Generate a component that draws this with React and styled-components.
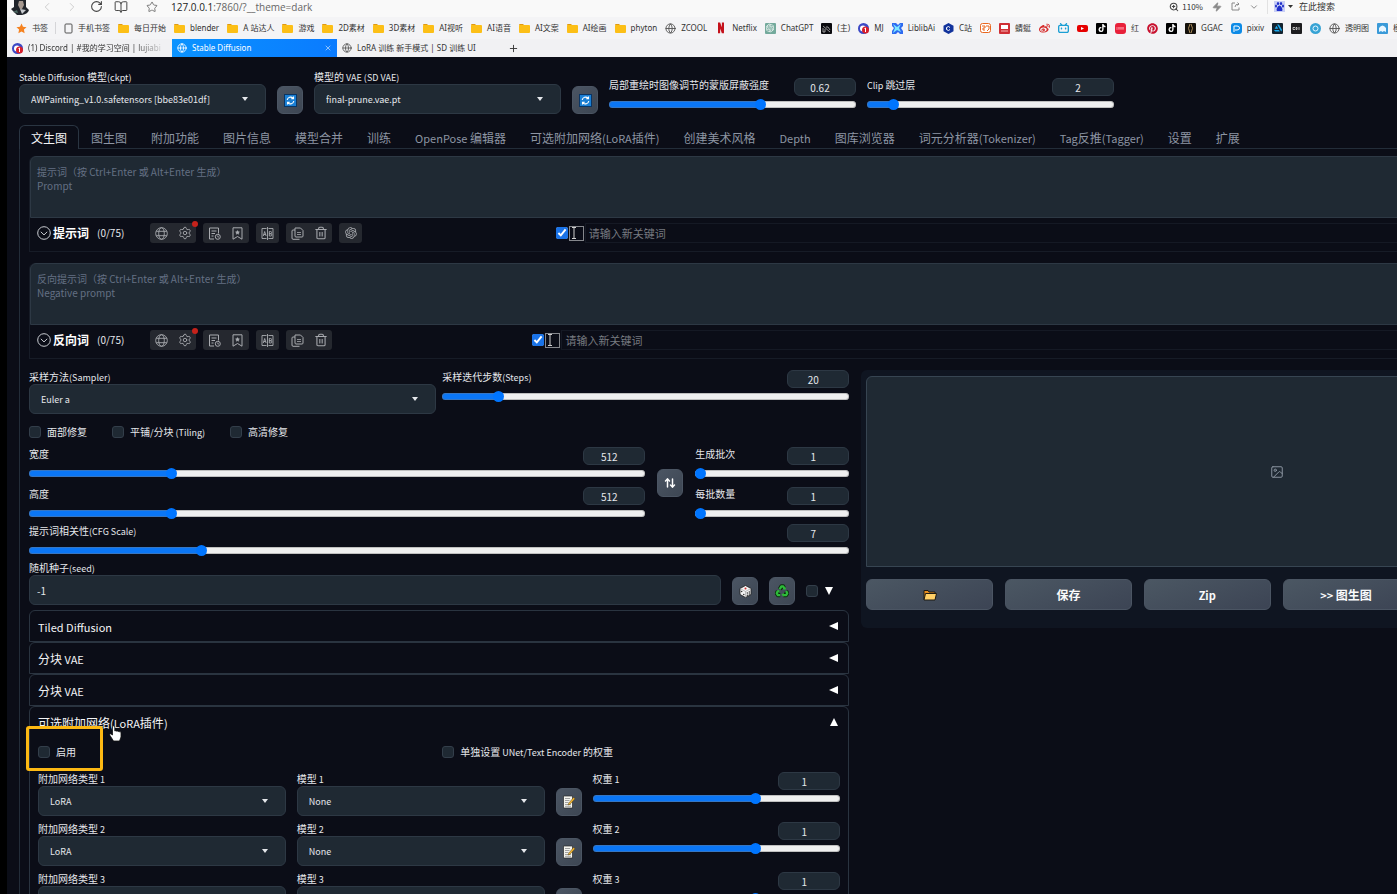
import { useState } from "react"
import styled, { createGlobalStyle, css } from "styled-components"
import { ChevronDown, ChevronLeft, ChevronRight, Globe, Plus, RotateCw, Star, X, ZoomIn, BookOpen, Zap, Image as ImageIcon, ArrowUpDown, Settings, Trash2 } from "lucide-react"
import { FaBilibili, FaPinterest, FaTiktok, FaWeibo, FaArtstation } from "react-icons/fa6"
import { RiOpenaiFill, RiNetflixFill } from "react-icons/ri"

const GlobalStyle = createGlobalStyle`
    *, *::before, *::after { box-sizing: border-box; }
    body {
        margin: 0;
        background: #000;
        font-family: "Noto Sans CJK SC", "Noto Sans", sans-serif;
        overflow: hidden;
    }
    button, input, select, textarea {
        font-family: inherit;
        margin: 0;
    }
    button { cursor: pointer; }
    svg { display: block; flex: none; }
`

/* ---------- data ---------- */

const bookmarks = [
    { icon: "star", text: "书签", divider: true },
    { icon: "phone", text: "手机书签" },
    { icon: "folder", text: "每日开始" },
    { icon: "folder", text: "blender" },
    { icon: "folder", text: "A 站达人" },
    { icon: "folder", text: "游戏" },
    { icon: "folder", text: "2D素材" },
    { icon: "folder", text: "3D素材" },
    { icon: "folder", text: "AI视听" },
    { icon: "folder", text: "AI语音" },
    { icon: "folder", text: "AI文案" },
    { icon: "folder", text: "AI绘画" },
    { icon: "folder", text: "phyton" },
    { icon: "globe", text: "ZCOOL" },
    { icon: "netflix", text: "Netflix" },
    { icon: "chatgpt", text: "ChatGPT" },
    { icon: "peak", text: "(主)" },
    { icon: "discord", text: "MJ" },
    { icon: "liblib", text: "LiblibAi" },
    { icon: "hex", text: "C站" },
    { icon: "orange" },
    { icon: "redbox", text: "蜻蜓" },
    { icon: "weibo" },
    { icon: "bili" },
    { icon: "youtube" },
    { icon: "tiktok" },
    { icon: "xhs", text: "红" },
    { icon: "pinterest" },
    { icon: "tiktok" },
    { icon: "ggac", text: "GGAC" },
    { icon: "pixiv", text: "pixiv" },
    { icon: "artstation" },
    { icon: "cgi" },
    { icon: "ring" },
    { icon: "globe", text: "透明图" },
    { icon: "ghost", text: "模" },
]

const navTabs = [
    "文生图", "图生图", "附加功能", "图片信息", "模型合并", "训练", "OpenPose 编辑器",
    "可选附加网络(LoRA插件)", "创建美术风格", "Depth", "图库浏览器", "词元分析器(Tokenizer)",
    "Tag反推(Tagger)", "设置", "扩展",
]

const foldedPanels = ["Tiled Diffusion", "分块 VAE", "分块 VAE"]

/* ---------- icons ---------- */

function BookmarkIcon({ name }) {
    switch (name) {
        case "star":
            return <svg width="11" height="11" viewBox="0 0 24 24"><path fill="#f58220" d="M12 1l3.3 7.2 7.7.9-5.700 5.300 1.500 7.800L12 18.300 5.200 22.200l1.500-7.800L1 9.100l7.700-.9z" /></svg>
        case "phone":
            return <svg width="9" height="11" viewBox="0 0 9 11"><rect x="1" y="1" width="7" height="9" rx="1" fill="none" stroke="#555" /></svg>
        case "folder":
            return (
                <svg width="11" height="11" viewBox="0 0 11 11">
                    <path fill="#e09a12" d="M0 2q0-1 1-1h3l1.500 1.500H0z" />
                    <rect y="2" width="11" height="8" rx="1" fill="#fcbf17" />
                </svg>
            )
        case "globe":
            return <Globe size={11} color="#555" strokeWidth={2} />
        case "netflix":
            return <RiNetflixFill size={12} color="#c4111b" />
        case "chatgpt":
            return <Chip $bg="#74aa9c"><RiOpenaiFill size={10} color="#fff" /></Chip>
        case "peak":
            return <Chip $bg="#0b0b0f"><svg width="11" height="11" viewBox="0 0 11 11"><path d="M2 3l7 6M2 5v4h2V6M5 4h2l2 3" stroke="#bbb" fill="none" strokeWidth=".8" /></svg></Chip>
        case "discord":
            return (
                <svg width="11" height="11" viewBox="0 0 22 22">
                    <circle cx="11" cy="11" r="11" fill="#3c49c5" />
                    <circle cx="10" cy="11" r="6" fill="#fff" />
                    <circle cx="15" cy="14" r="7" fill="#d71f2b" />
                    <path d="M13 11l2-1v8" stroke="#fff" strokeWidth="2" fill="none" />
                </svg>
            )
        case "liblib":
            return (
                <svg width="11" height="11" viewBox="0 0 11 11">
                    <path d="M0 0h4l2 2 2-2h3v3L9 5l2 3v3H8L6 9l-2 2H0V8l2-3-2-2z" fill="#2f6bf0" />
                    <path d="M1 1l4 3 4-3-2 4 2 4-4-2-4 3 2-5z" fill="#7ee8ff" />
                </svg>
            )
        case "hex":
            return <svg width="11" height="11" viewBox="0 0 22 22"><path d="M11 0l10 5.500v11L11 22 1 16.500v-11z" fill="#12339c" /><path d="M14 9l-3-2-4 2v4l4 2 3-2" fill="none" stroke="#fff" strokeWidth="2" /></svg>
        case "orange":
            return <svg width="11" height="11" viewBox="0 0 11 11"><rect x=".5" y=".5" width="10" height="9" rx="2" fill="#fff" stroke="#e9671f" /><path d="M2 3h3v2H3v2h2M6 3h3v3L7 8" stroke="#e9671f" fill="none" /></svg>
        case "redbox":
            return <Chip $bg="#cf2f35"><svg width="11" height="11" viewBox="0 0 11 11"><rect x="2" y="2" width="7" height="4" fill="#fff" /><path d="M2 8h7" stroke="#f5b5b5" /></svg></Chip>
        case "weibo":
            return <FaWeibo size={11} color="#d52b2b" />
        case "bili":
            return <FaBilibili size={11} color="#1c9fd4" />
        case "youtube":
            return <svg width="11" height="11" viewBox="0 0 11 11"><rect y="2" width="11" height="7" rx="2" fill="#e60000" /><path d="M4 4l3 1.500L4 7z" fill="#fff" /></svg>
        case "tiktok":
            return <Chip $bg="#000"><FaTiktok size={8} color="#fff" /></Chip>
        case "xhs":
            return <Chip $bg="#e8203a" $round><svg width="11" height="11" viewBox="0 0 11 11"><path d="M2 4v3M4 4v3M6 4v3M8 4v3M3 5h6" stroke="#ff9aa8" strokeWidth=".8" /></svg></Chip>
        case "pinterest":
            return <FaPinterest size={11} color="#c8102e" />
        case "ggac":
            return <Chip $bg="#15110c"><svg width="11" height="11" viewBox="0 0 11 11"><path d="M5 1Q2 5 5 10M6 1q3 4 0 9" stroke="#a88a5a" fill="none" /></svg></Chip>
        case "pixiv":
            return <Chip $bg="#0e8be6" $round><svg width="11" height="11" viewBox="0 0 11 11"><path d="M3 9V3h3q2.500 0 2.500 2T6 7H4" stroke="#fff" fill="none" /></svg></Chip>
        case "artstation":
            return <Chip $bg="#13232f"><FaArtstation size={8} color="#19a9ef" /></Chip>
        case "cgi":
            return <Chip $bg="#1d1d1f"><svg width="11" height="11" viewBox="0 0 11 11"><path d="M2 4.500h2M2 4.500v2h2M5 4.500v2h1v-2zM8 4v3" stroke="#ddd" fill="none" strokeWidth=".8" /></svg></Chip>
        case "ring":
            return <svg width="11" height="11" viewBox="0 0 11 11"><circle cx="5.500" cy="5.500" r="5.500" fill="#37a3d4" /><circle cx="5.500" cy="5.500" r="2.500" fill="none" stroke="#e5f6ff" /></svg>
        default:
            return <Chip $bg="#3a9ad8"><svg width="11" height="11" viewBox="0 0 11 11"><path d="M2 9V5q3.500-5 7 0v4L7 8 5.500 9 4 8z" fill="#e8f6ff" /></svg></Chip>
    }
}

const RefreshEmoji = () => (
    <svg width="13" height="13" viewBox="0 0 13 13">
        <rect width="13" height="13" fill="#0a3564" />
        <rect x="1" y="1" width="11" height="11" fill="#1a7fd4" />
        <path d="M3.200 6A3.400 3.400 0 0 1 9 4.200M9.800 7A3.400 3.400 0 0 1 4 8.800M9.500 2.500v2.300H7.200M3.500 10.500V8.200h2.300" fill="none" stroke="#fff" strokeWidth="1.100" />
    </svg>
)

const DiceEmoji = () => (
    <svg width="13" height="13" viewBox="0 0 13 13">
        <path d="M6.500.5l5.500 3v6l-5.500 3-5.500-3v-6z" fill="#f4f4f4" stroke="#1c1c1c" strokeWidth=".8" />
        <path d="M1 3.500l5.500 3 5.500-3M6.500 6.500v6" stroke="#999" fill="none" strokeWidth=".6" />
        <circle cx="6.500" cy="3.500" r="1" fill="#c33" />
        <g fill="#222"><circle cx="2.700" cy="6.500" r=".7" /><circle cx="4.800" cy="9.500" r=".7" /><circle cx="8.300" cy="8" r=".7" /><circle cx="10.300" cy="7" r=".7" /><circle cx="8.300" cy="10.300" r=".7" /><circle cx="10.300" cy="9" r=".7" /></g>
    </svg>
)

const RecycleEmoji = () => (
    <svg width="14" height="14" viewBox="0 0 24 24" fill="none" strokeLinejoin="round">
        <g stroke="#0a2a0c" strokeWidth="7"><path d="M8 9l3-5h3l2 4M19 12l2 4-2 3h-5M9 19H5l-2-3 2-4" /></g>
        <g stroke="#2dbb3a" strokeWidth="4"><path d="M8 9l3-5h3l2 4M19 12l2 4-2 3h-5M9 19H5l-2-3 2-4" /></g>
        <path d="M13 9l5 1 1-5zM15 15v7l-4-3.500zM2 12l5-2 1 5z" fill="#2dbb3a" />
    </svg>
)

const NoteEmoji = () => (
    <svg width="14" height="14" viewBox="0 0 14 14">
        <path d="M1.500 1h9v12h-9z" fill="#f3f3ee" stroke="#2a2a2a" strokeWidth=".7" />
        <path d="M3 3.500h5M3 5.500h4.500M3 7.500h3.500M3 9.500h6M3 11.300h6" stroke="#8d8d8d" strokeWidth=".8" />
        <path d="M6.500 8.500l5-6 1.500 1.200-5 5.500-2 .8z" fill="#f2b632" stroke="#5b4310" strokeWidth=".5" />
    </svg>
)

const FolderEmoji = () => (
    <svg width="14" height="12" viewBox="0 0 14 12">
        <path d="M1 10.500V1.500h4l1 1.500h6v2" fill="#e88d1c" stroke="#1d1a12" strokeWidth="1" />
        <path d="M1 11l1.500-6.500h11L12 11z" fill="#ffd066" stroke="#1d1a12" strokeWidth="1" />
    </svg>
)

const CircleDown = () => (
    <svg width="14" height="14" viewBox="0 0 14 14" fill="none" stroke="#c9ccd1">
        <circle cx="7" cy="7" r="6.300" />
        <path d="M3.800 5.800L7 8.900l3.200-3.100" />
    </svg>
)

const GridGlobe = () => (
    <svg width="13" height="13" viewBox="0 0 13 13" fill="none" stroke="currentColor" strokeWidth=".9">
        <circle cx="6.500" cy="6.500" r="5.800" />
        <ellipse cx="6.500" cy="6.500" rx="2.800" ry="5.800" />
        <path d="M1.200 4.300h10.600M1.200 8.700h10.600" />
    </svg>
)

const HistoryIcon = () => (
    <svg width="13" height="13" viewBox="0 0 13 13" fill="none" stroke="currentColor">
        <path d="M6 12H1.500V1h9v5.500M3.500 4h5M3.500 6.500h3.500M3.500 9h2" />
        <circle cx="9.800" cy="9.800" r="2.500" />
        <path d="M9.800 8.500v1.500h1.200" strokeWidth=".8" />
    </svg>
)

const BookmarkStar = () => (
    <svg width="13" height="13" viewBox="0 0 13 13" fill="none" stroke="currentColor">
        <path d="M2 .8h9v11.400L6.500 9.500 2 12.200z" />
        <path d="M6.500 3.200l.8 1.300 1.400.3-1 1.100.2 1.500-1.400-.6-1.400.6.2-1.500-1-1.100 1.400-.3z" fill="currentColor" strokeWidth=".2" />
    </svg>
)

const TranslateIcon = () => (
    <svg width="13" height="13" viewBox="0 0 13 13" fill="none" stroke="currentColor" strokeWidth=".9">
        <path d="M5.500 1.500H1v10h4.500M7.500 1.500H12v10H7.500M6.500 0v13" />
        <path d="M2.300 9L3.700 4.500 5.100 9M2.700 7.500h2M8.300 4.500V9h1.500q1 0 1-1.200T9.800 6.700H8.300h1.300q1 0 1-1.100t-1-1.100z" />
    </svg>
)

const CopyIcon = () => (
    <svg width="13" height="13" viewBox="0 0 13 13" fill="none" stroke="currentColor">
        <path d="M4 1h5.500L12 3.500V9q0 1-1 1H5Q4 10 4 9zM4 3H2Q1 3 1 4v7q0 1.300 1 1.300h6.500" />
        <path d="M6 5.500h4M6 7.500h4" strokeWidth=".8" />
    </svg>
)

const IBeam = () => (
    <svg width="6" height="12" viewBox="0 0 6 12"><path d="M1 .5h4M1 11.500h4M3 .5v11" stroke="#d0d0d0" /></svg>
)

const HandCursor = () => (
    <svg width="13" height="17" viewBox="0 0 13 17">
        <path d="M3.500 1.500q1.500-1.500 2.300.3V6q1.200-.8 2 .2 1.300-.6 2 .5 1.700-.4 2.200 1V12l-1.500 4H4.500L1 10.500q-.8-1.500.6-1.800L3.500 10z" fill="#fff" stroke="#111" strokeWidth=".8" />
    </svg>
)

const Avatar = () => (
    <svg width="18" height="16" viewBox="0 0 18 16">
        <path d="M3 0h12v8l3 3q-1 4-7 5H6L0 10l3-2z" fill="#20242a" />
        <path d="M8 2h4l1 4-2 4H9L7 6z" fill="#a5988f" />
        <path d="M9 10l6 1-4 4z" fill="#c9ccd0" />
        <path d="M2 13l4-2 1 3z" fill="#4d6a63" />
    </svg>
)

const BaiduPaw = () => (
    <svg width="11" height="11" viewBox="0 0 22 22">
        <rect width="22" height="22" fill="#c9cff5" />
        <g fill="#2130c9"><ellipse cx="8" cy="5" rx="2.300" ry="3" /><ellipse cx="14" cy="5" rx="2.300" ry="3" /><ellipse cx="4" cy="10" rx="2" ry="3" /><ellipse cx="18" cy="10" rx="2" ry="3" /><path d="M11 9q3 0 5 5t0 6H6q-2-1 0-6t5-5z" /></g>
    </svg>
)

/* ---------- pieces ---------- */

// latin letters of the CJK font look big beside the hanzi, so they get one size less
function Mixed({ text, size }) {
    return (
        <span>
            {text.split(/([\x20-\x7e]+)/).map((part, index) => (
                index % 2 ? <Latin key={index} $size={size - 1}>{part}</Latin> : part
            ))}
        </span>
    )
}

function SelectField({ id, label, value }) {
    return (
        <Field>
            <Label htmlFor={id}><Mixed text={label} size={10} /></Label>
            <SelectWrap>
                <Select id={id} defaultValue={value}>
                    <option>{value}</option>
                </Select>
                <Caret width="6" height="4" viewBox="0 0 6 4"><path d="M0 0h6L3 4z" fill="#e5e7eb" /></Caret>
            </SelectWrap>
        </Field>
    )
}

function SliderField({ id, label, value, min, max, step = 1 }) {
    const [current, setCurrent] = useState(value)
    const change = (e) => setCurrent(e.target.value)
    const filled = ((current - min) / (max - min)) * 100

    return (
        <Field>
            <SliderHead>
                <Label htmlFor={id}><Mixed text={label} size={10} /></Label>
                <NumberBox type="number" aria-label={label} min={min} max={max} step={step} value={current} onChange={change} />
            </SliderHead>
            <Range id={id} type="range" min={min} max={max} step={step} value={current} onChange={change} style={{ "--filled": `${filled}%` }} />
        </Field>
    )
}

function PromptBlock({ id, title, placeholder, withGpt }) {
    return (
        <Prompt>
            <PromptText aria-label={title} placeholder={placeholder} />
            <PromptBar>
                <PromptTools>
                    <PromptTitle>
                        <CircleDown />
                        <strong>{title}</strong>
                        <span>(0/75)</span>
                    </PromptTitle>
                    <ToolGroup>
                        <button aria-label="语言"><GridGlobe /></button>
                        <button aria-label="设置"><Settings size={14} strokeWidth={1.5} /></button>
                        <RedDot />
                    </ToolGroup>
                    <ToolGroup>
                        <button aria-label="历史"><HistoryIcon /></button>
                        <button aria-label="收藏"><BookmarkStar /></button>
                    </ToolGroup>
                    <ToolGroup>
                        <button aria-label="翻译"><TranslateIcon /></button>
                    </ToolGroup>
                    <ToolGroup>
                        <button aria-label="复制"><CopyIcon /></button>
                        <button aria-label="删除"><Trash2 size={14} strokeWidth={1.800} /></button>
                    </ToolGroup>
                    {withGpt && (
                        <ToolGroup>
                            <button aria-label="ChatGPT"><RiOpenaiFill size={14} /></button>
                        </ToolGroup>
                    )}
                </PromptTools>
                <Keyword>
                    <BlueCheck type="checkbox" aria-label="启用输入" defaultChecked />
                    <BeamBox><IBeam /></BeamBox>
                    <KeywordInput id={id} aria-label="新关键词" placeholder="请输入新关键词" />
                </Keyword>
            </PromptBar>
        </Prompt>
    )
}

function Check({ label }) {
    return (
        <CheckLabel>
            <DarkCheck type="checkbox" />
            <Mixed text={label} size={10} />
        </CheckLabel>
    )
}

function Browser() {
    return (
        <header>
            <AddressRow>
                <Avatar />
                <NavIcons>
                    <ChevronLeft size={14} color="#c8c8c8" strokeWidth={1.500} />
                    <ChevronRight size={14} color="#c8c8c8" strokeWidth={1.500} />
                    <RotateCw size={13} color="#444" strokeWidth={2} />
                    <BookOpen size={14} color="#444" strokeWidth={1.700} />
                </NavIcons>
                <Star size={12} color="#666" strokeWidth={1.700} />
                <Url>127.0.0.1<span>:7860/?__theme=dark</span></Url>
                <AddressTools>
                    <ZoomIn size={10} color="#444" strokeWidth={2.500} />
                    <small>110%</small>
                    <Zap size={10} color="#888" fill="#888" />
                    <svg width="9" height="9" viewBox="0 0 9 9" fill="none" stroke="#888"><path d="M4 1H1v7h7V5.500M4 5q0-3 4-3M6.500.5L8 2 6.500 3.500" /></svg>
                    <ChevronDown size={10} color="#777" />
                </AddressTools>
                <SearchTools>
                    <BaiduPaw />
                    <svg width="5" height="3" viewBox="0 0 5 3"><path d="M0 0h5L2.500 3z" fill="#333" /></svg>
                    <span>在此搜索</span>
                </SearchTools>
            </AddressRow>
            <BookmarkRow>
                {bookmarks.map((item, index) => (
                    <Bookmark key={index} href="#" $divider={item.divider} aria-label={item.text || item.icon}>
                        <BookmarkIcon name={item.icon} />
                        {item.text}
                    </Bookmark>
                ))}
            </BookmarkRow>
            <BrowserTabs>
                <BrowserTab $faded>
                    <BookmarkIcon name="discord" />
                    <span>(1) Discord | #我的学习空间 | lujiabi</span>
                </BrowserTab>
                <BrowserTab $active>
                    <Globe size={10} color="#fff" />
                    <span>Stable Diffusion</span>
                    <X size={8} color="#cfe6ff" />
                </BrowserTab>
                <BrowserTab>
                    <Globe size={10} color="#555" />
                    <span>LoRA 训练 新手模式 | SD 训练 UI</span>
                </BrowserTab>
                <NewTab aria-label="新标签页"><Plus size={11} color="#333" /></NewTab>
            </BrowserTabs>
        </header>
    )
}

export default function App() {
    return (
        <Screen>
            <GlobalStyle />
            <Browser />
            <Page>
                <QuickSettings>
                    <SelectField id="ckpt" label="Stable Diffusion 模型(ckpt)" value="AWPainting_v1.0.safetensors [bbe83e01df]" />
                    <ToolButton aria-label="刷新模型"><RefreshEmoji /></ToolButton>
                    <SelectField id="vae" label="模型的 VAE (SD VAE)" value="final-prune.vae.pt" />
                    <ToolButton aria-label="刷新 VAE"><RefreshEmoji /></ToolButton>
                    <Lowered>
                        <SliderField id="mask" label="局部重绘时图像调节的蒙版屏蔽强度" value={0.62} min={0} max={1} step={0.01} />
                    </Lowered>
                    <Lowered>
                        <SliderField id="clip" label="Clip 跳过层" value={2} min={1} max={12} />
                    </Lowered>
                </QuickSettings>

                <NavBar>
                    {navTabs.map((tab, index) => (
                        <NavTab key={tab} $active={index === 0}><Mixed text={tab} size={12} /></NavTab>
                    ))}
                </NavBar>

                <Pane>
                    <PromptBlock id="positive" title="提示词" placeholder={"提示词（按 Ctrl+Enter 或 Alt+Enter 生成）\nPrompt"} withGpt />
                    <PromptBlock id="negative" title="反向词" placeholder={"反向提示词（按 Ctrl+Enter 或 Alt+Enter 生成）\nNegative prompt"} />

                    <Workspace>
                        <Params>
                            <SamplerRow>
                                <SelectField id="sampler" label="采样方法(Sampler)" value="Euler a" />
                                <SliderField id="steps" label="采样迭代步数(Steps)" value={20} min={1} max={150} />
                            </SamplerRow>
                            <CheckRow>
                                <Check label="面部修复" />
                                <Check label="平铺/分块 (Tiling)" />
                                <Check label="高清修复" />
                            </CheckRow>
                            <SizeRow>
                                <Stack>
                                    <SliderField id="width" label="宽度" value={512} min={64} max={2048} step={8} />
                                    <SliderField id="height" label="高度" value={512} min={64} max={2048} step={8} />
                                </Stack>
                                <ToolButton aria-label="交换宽高" $middle><ArrowUpDown size={12} color="#fff" strokeWidth={3} /></ToolButton>
                                <Stack>
                                    <SliderField id="batches" label="生成批次" value={1} min={1} max={100} />
                                    <SliderField id="batchSize" label="每批数量" value={1} min={1} max={8} />
                                </Stack>
                            </SizeRow>
                            <SliderField id="cfg" label="提示词相关性(CFG Scale)" value={7} min={1} max={30} />
                            <SeedRow>
                                <Field>
                                    <Label htmlFor="seed"><Mixed text="随机种子(seed)" size={10} /></Label>
                                    <TextInput id="seed" defaultValue="-1" />
                                </Field>
                                <ToolButton aria-label="随机"><DiceEmoji /></ToolButton>
                                <ToolButton aria-label="重用种子"><RecycleEmoji /></ToolButton>
                                <SeedExtra>
                                    <DarkCheck type="checkbox" aria-label="更多种子选项" />
                                    <svg width="8" height="8" viewBox="0 0 8 8"><path d="M0 0h8L4 8z" fill="#fff" /></svg>
                                </SeedExtra>
                            </SeedRow>

                            <div>
                                {foldedPanels.map((name, index) => (
                                    <Accordion key={index}>
                                        <AccordionHead>
                                            <Mixed text={name} size={12} />
                                            <svg width="9" height="8" viewBox="0 0 9 8"><path d="M9 0v8L0 4z" fill="#fff" /></svg>
                                        </AccordionHead>
                                    </Accordion>
                                ))}
                                <Accordion>
                                    <AccordionHead>
                                        <Mixed text="可选附加网络(LoRA插件)" size={12} />
                                        <svg width="8" height="8" viewBox="0 0 8 8"><path d="M0 8h8L4 0z" fill="#fff" /></svg>
                                    </AccordionHead>
                                    <AccordionBody>
                                        <LoraOptions>
                                            <Highlighted>
                                                <Check label="启用" />
                                                <Pointer><HandCursor /></Pointer>
                                            </Highlighted>
                                            <Check label="单独设置 UNet/Text Encoder 的权重" />
                                        </LoraOptions>
                                        {[1, 2, 3].map((n) => (
                                            <LoraRow key={n}>
                                                <SelectField id={`net${n}`} label={`附加网络类型 ${n}`} value="LoRA" />
                                                <SelectField id={`model${n}`} label={`模型 ${n}`} value="None" />
                                                <ToolButton aria-label={`模型 ${n} 信息`}><NoteEmoji /></ToolButton>
                                                <SliderField id={`weight${n}`} label={`权重 ${n}`} value={1} min={-1} max={2} step={0.05} />
                                            </LoraRow>
                                        ))}
                                    </AccordionBody>
                                </Accordion>
                            </div>
                        </Params>

                        <Results>
                            <Gallery><ImageIcon size={14} color="#8b95a1" strokeWidth={1.700} /></Gallery>
                            <ResultButtons>
                                <ResultButton aria-label="打开文件夹"><FolderEmoji /></ResultButton>
                                <ResultButton>保存</ResultButton>
                                <ResultButton><Mixed text="Zip" size={12} /></ResultButton>
                                <ResultButton><Mixed text=">> 图生图" size={12} /></ResultButton>
                            </ResultButtons>
                        </Results>
                    </Workspace>
                </Pane>
            </Page>
        </Screen>
    )
}

/* ---------- browser styles ---------- */

const Screen = styled.div`
    height: 100vh;
    margin-left: 7px;
    overflow: hidden;
    background: #0b0d17;
    color: #e5e7eb;
`

const AddressRow = styled.div`
    display: flex;
    align-items: center;
    height: 17px;
    padding: 0 62px 4px 4px;
    background: #f9f9f9;
    color: #333;
`

const NavIcons = styled.div`
    display: flex;
    gap: 11px;
    margin: 0 18px 0 11px;
`

const Url = styled.div`
    margin-left: 13px;
    font: 10px/14px "Open Sans", sans-serif;
    color: #222;
    span { color: #666; }
`

const AddressTools = styled.div`
    display: flex;
    align-items: center;
    gap: 9px;
    margin-left: auto;
    padding-right: 8px;
    border-right: 1px solid #e2e2e2;
    small {
        margin-left: -6px;
        font-size: 8px;
        line-height: 14px;
    }
`

const SearchTools = styled.div`
    display: flex;
    align-items: center;
    gap: 3px;
    padding-left: 6px;
    font-size: 9px;
    line-height: 14px;
    span { margin-left: 3px; }
`

const BookmarkRow = styled.nav`
    display: flex;
    align-items: center;
    gap: 8px;
    height: 22px;
    padding-left: 9px;
    background: #f4f4f6;
    overflow: hidden;
`

const Bookmark = styled.a`
    display: flex;
    align-items: center;
    gap: 5px;
    flex: none;
    font: 8px/12px "Noto Sans", "Noto Sans CJK SC", sans-serif;
    color: #333;
    text-decoration: none;
    ${({ $divider }) => $divider && css`
        padding-right: 7px;
        border-right: 1px solid #d5d5d8;
    `}
`

const Chip = styled.span`
    display: flex;
    align-items: center;
    justify-content: center;
    width: 11px;
    height: 11px;
    border-radius: ${({ $round }) => ($round ? "3px" : "1px")};
    background: ${({ $bg }) => $bg};
`

const BrowserTabs = styled.div`
    display: flex;
    height: 18px;
    background: #f1f1f3;
`

const BrowserTab = styled.button`
    display: flex;
    align-items: center;
    gap: 5px;
    width: 165px;
    height: 18px;
    padding: 0 5px;
    border: 0;
    background: ${({ $active }) => ($active ? "linear-gradient(90deg, #0b93ff, #0a7bff)" : "none")};
    color: ${({ $active }) => ($active ? "#fff" : "#333")};
    font: 8px/12px "Noto Sans", "Noto Sans CJK SC", sans-serif;
    text-align: left;
    span {
        flex: 1;
        overflow: hidden;
        white-space: nowrap;
        ${({ $faded }) => $faded && "mask-image: linear-gradient(90deg, #000 75%, transparent);"}
    }
`

const NewTab = styled.button`
    display: flex;
    align-items: center;
    padding: 0 6px;
    border: 0;
    background: none;
`

/* ---------- form styles ---------- */

const boxed = css`
    border: 1px solid #2d3844;
    border-radius: 6px;
    background: #1f2933;
    color: #e5e7eb;
    outline: none;
`

const Latin = styled.span`
    font-size: ${({ $size }) => $size}px;
    white-space: pre;
`

const Field = styled.div`
    display: flex;
    flex-direction: column;
    min-width: 0;
`

const Label = styled.label`
    height: 14px;
    font-size: 10px;
    line-height: 14px;
    white-space: nowrap;
    color: #e5e7eb;
`

const SelectWrap = styled.div`
    display: grid;
    align-items: center;
`

const Select = styled.select`
    ${boxed}
    grid-area: 1 / 1;
    width: 100%;
    height: 30px;
    padding: 0 28px 0 11px;
    appearance: none;
    font-size: 9px;
`

const Caret = styled.svg`
    grid-area: 1 / 1;
    justify-self: end;
    margin-right: 18px;
    pointer-events: none;
`

const TextInput = styled.input`
    ${boxed}
    height: 30px;
    padding: 0 7px;
    font-size: 10px;
`

const SliderHead = styled.div`
    display: flex;
    justify-content: space-between;
    align-items: flex-start;
    height: 18px;
    margin-bottom: 2px;
`

const NumberBox = styled.input`
    ${boxed}
    width: 62px;
    height: 18px;
    padding: 0 10px 0 0;
    appearance: textfield;
    font-size: 10px;
    text-align: center;
    &::-webkit-inner-spin-button { appearance: none; }
`

const Range = styled.input`
    width: 100%;
    height: 12px;
    appearance: none;
    background: none;
    &::-webkit-slider-runnable-track {
        height: 7px;
        border-radius: 4px;
        background: linear-gradient(90deg, #0b76f5 var(--filled), #efefef var(--filled));
        box-shadow: inset 0 0 0 1px rgba(120, 120, 120, 0.4);
    }
    &::-webkit-slider-thumb {
        appearance: none;
        width: 11px;
        height: 11px;
        margin-top: -2px;
        border-radius: 50%;
        background: #0075ff;
    }
`

const ToolButton = styled.button`
    display: flex;
    align-items: center;
    justify-content: center;
    align-self: ${({ $middle }) => ($middle ? "center" : "flex-end")};
    flex: none;
    width: 26px;
    height: 28px;
    padding: 0;
    border: 1px solid #4b5563;
    border-radius: 6px;
    background: linear-gradient(135deg, #4b5563, #3d4653);
`

const CheckLabel = styled.label`
    display: flex;
    align-items: center;
    gap: 6px;
    height: 14px;
    font-size: 10px;
    line-height: 14px;
    white-space: nowrap;
`

const DarkCheck = styled.input`
    width: 12px;
    height: 12px;
    appearance: none;
    border: 1px solid #333e4a;
    border-radius: 3px;
    background: #1f2933;
    &:checked { background: #0075ff; }
`

/* ---------- page styles ---------- */

/* the app is wider than the window and runs off its right side */
const Page = styled.main`
    width: 122%;
    padding: 13px 6px 0 12px;
`

const QuickSettings = styled.div`
    display: grid;
    grid-template-columns: 247px 26px 247px 26px 247px 247px;
    gap: 11px;
    margin-bottom: 11px;
`

const Lowered = styled.div`
    padding-top: 8px;
`

const NavBar = styled.nav`
    display: flex;
`

const NavTab = styled.button`
    height: 24px;
    margin-bottom: -1px;
    padding: 0 11px;
    border: 1px solid transparent;
    border-bottom: 0;
    border-radius: 6px 6px 0 0;
    background: none;
    color: #8d95a3;
    font-size: 12px;
    line-height: 22px;
    white-space: nowrap;
    ${({ $active }) => $active && css`
        position: relative;
        border-color: #2a3542;
        background: #0b0d17;
        color: #f3f4f6;
    `}
`

const Pane = styled.section`
    padding: 7px 9px;
    border: 1px solid #232d39;
`

const Prompt = styled.div`
    margin-bottom: 11px;
    border: 1px solid #171c27;
    border-top: 0;
    border-radius: 6px 6px 0 0;
`

const PromptText = styled.textarea`
    ${boxed}
    display: block;
    width: 100%;
    height: 62px;
    padding: 8px 6px;
    border-radius: 6px 6px 0 0;
    font-size: 10px;
    line-height: 14px;
    resize: none;
    &::placeholder { color: #647083; }
`

const PromptBar = styled.div`
    display: flex;
    height: 33px;
    padding-top: 5px;
`

const PromptTools = styled.div`
    display: flex;
    flex: 2 1 auto;
    gap: 7px;
`

const PromptTitle = styled.div`
    display: flex;
    align-items: center;
    width: 113px;
    height: 20px;
    padding-left: 7px;
    line-height: 20px;
    strong {
        margin: 0 8px 0 2px;
        font-size: 12px;
        color: #fff;
    }
    span { font-size: 10px; }
`

const ToolGroup = styled.div`
    position: relative;
    display: flex;
    height: 20px;
    border-radius: 3px;
    background: #25282f;
    button {
        display: flex;
        align-items: center;
        justify-content: center;
        width: 23px;
        padding: 0;
        border: 0;
        background: none;
        color: #a9abb0;
    }
`

const RedDot = styled.i`
    position: absolute;
    top: -2px;
    right: -2px;
    width: 6px;
    height: 6px;
    border-radius: 50%;
    background: #c5221b;
`

const Keyword = styled.div`
    display: flex;
    align-items: center;
    flex: 7 1 452px;
    height: 20px;
    gap: 1px;
`

const BlueCheck = styled.input`
    display: grid;
    width: 12px;
    height: 12px;
    accent-color: #1a73e8;
`

const BeamBox = styled.span`
    display: flex;
    align-items: center;
    width: 15px;
    height: 15px;
    padding-left: 1px;
    border: 1px solid #85878c;
`

const KeywordInput = styled.input`
    flex: 1;
    height: 20px;
    padding: 0 3px;
    border: 1px solid #151924;
    background: none;
    color: #e5e7eb;
    font-size: 11px;
    &::placeholder { color: #777a80; }
`

const Workspace = styled.div`
    display: grid;
    grid-template-columns: 818fr 828fr;
    align-items: start;
    gap: 12px;
    margin-right: -5px;
`

const Params = styled.div`
    display: flex;
    flex-direction: column;
    gap: 5px;
`

const SamplerRow = styled.div`
    display: grid;
    grid-template-columns: 1fr 1fr;
    gap: 6px;
`

const CheckRow = styled.div`
    display: flex;
    gap: 25px;
    padding: 6px 0 3px;
`

const SizeRow = styled.div`
    display: grid;
    grid-template-columns: 4fr 26px 1fr;
    gap: 12px;
`

const Stack = styled.div`
    display: flex;
    flex-direction: column;
    gap: 8px;
    min-width: 0;
`

const SeedRow = styled.div`
    display: flex;
    gap: 11px;
    > ${Field} { flex: 1; }
`

const SeedExtra = styled.div`
    display: flex;
    align-items: center;
    align-self: flex-end;
    gap: 7px;
    width: 43px;
    height: 28px;
`

const Accordion = styled.section`
    border: 1px solid #2a3440;
    border-radius: 6px 6px 0 0;
`

const AccordionHead = styled.button`
    display: flex;
    align-items: center;
    justify-content: space-between;
    width: 100%;
    height: 30px;
    padding: 0 10px 0 8px;
    border: 0;
    background: none;
    color: #f3f4f6;
    font-size: 12px;
`

const AccordionBody = styled.div`
    display: flex;
    flex-direction: column;
    gap: 6px;
    padding: 8px 8px 20px;
`

const LoraOptions = styled.div`
    display: grid;
    grid-template-columns: 1fr 1fr;
    gap: 6px;
    margin-bottom: 7px;
`

const Highlighted = styled.div`
    position: relative;
    &::after {
        content: "";
        position: absolute;
        top: -19px;
        left: -12px;
        width: 77px;
        height: 45px;
        border: 3px solid #fdb913;
        border-radius: 3px;
        pointer-events: none;
    }
`

const Pointer = styled.div`
    position: absolute;
    top: -20px;
    left: 71px;
`

const LoraRow = styled.div`
    display: grid;
    grid-template-columns: 1fr 1fr 26px 1fr;
    gap: 11px;
`

const Results = styled.aside`
    padding: 6px 5px 18px;
    border-radius: 6px;
    background: #0f1521;
`

const Gallery = styled.div`
    display: flex;
    align-items: center;
    justify-content: center;
    height: 191px;
    border: 1px solid #374552;
    border-radius: 6px 0 0 0;
    background: #1f2933;
`

const ResultButtons = styled.div`
    display: grid;
    grid-template-columns: repeat(6, 1fr);
    gap: 12px;
    margin-top: 12px;
`

const ResultButton = styled.button`
    display: flex;
    align-items: center;
    justify-content: center;
    height: 31px;
    border: 1px solid #4b5563;
    border-radius: 6px;
    background: linear-gradient(160deg, #4b5763, #3c4454);
    color: #f9fafb;
    font-size: 12px;
    font-weight: 700;
`
